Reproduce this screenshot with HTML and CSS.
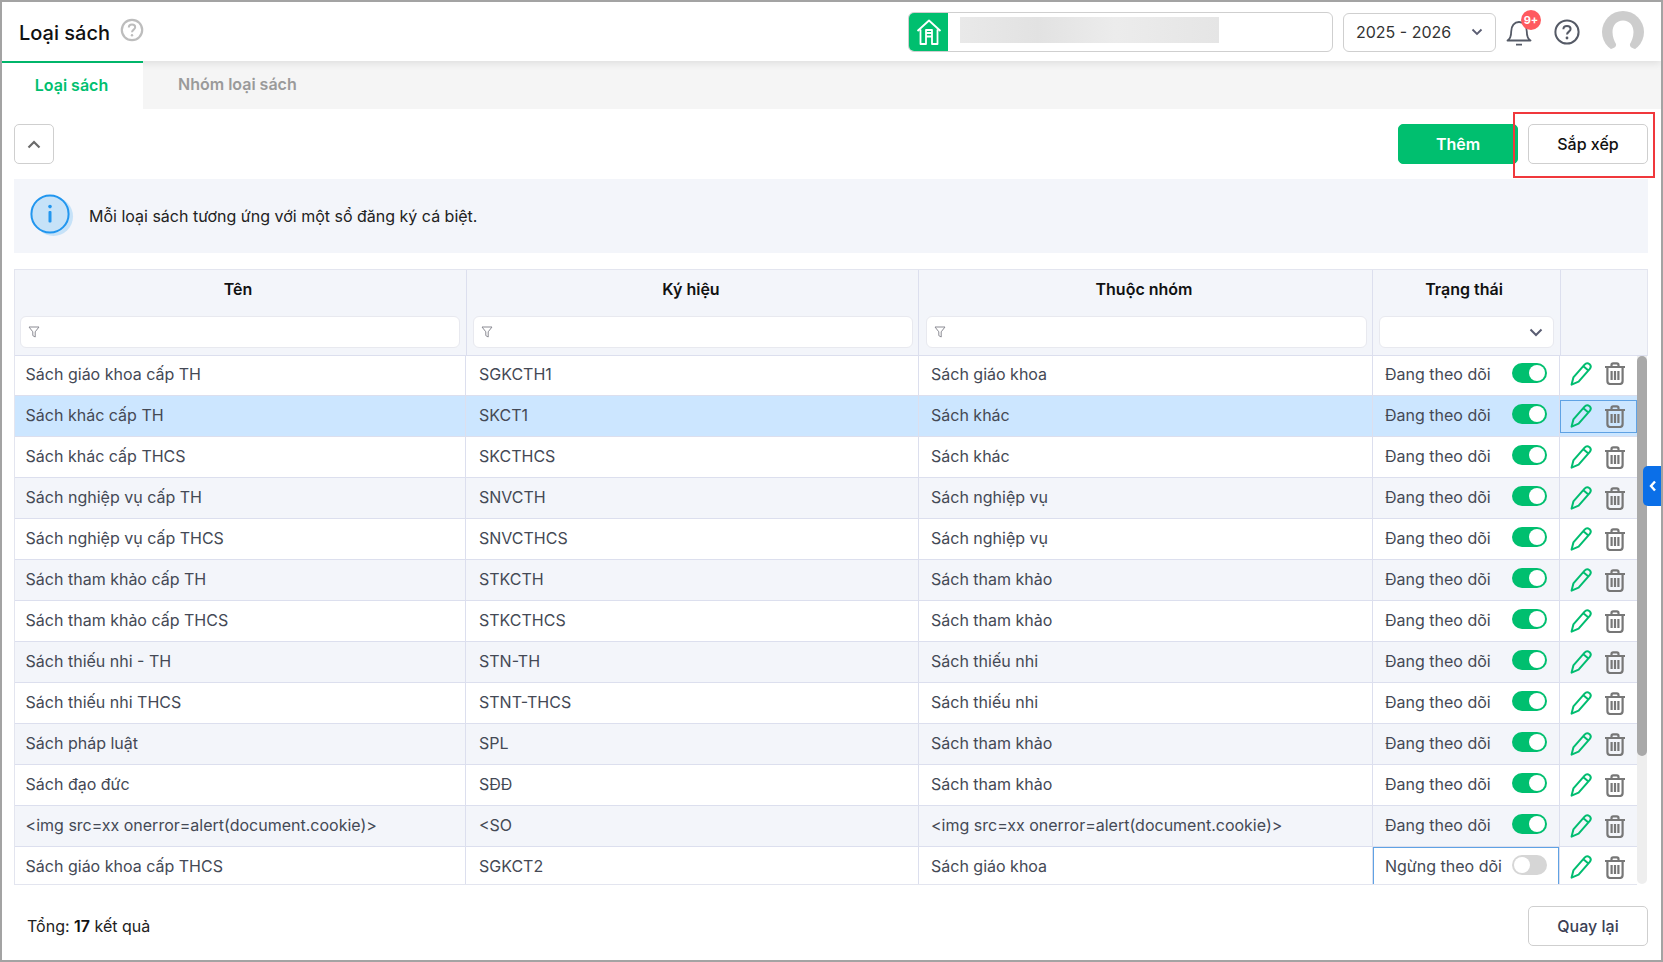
FILE: index.html
```html
<!DOCTYPE html>
<html lang="vi">
<head>
<meta charset="utf-8">
<title>Loại sách</title>
<link rel="stylesheet" href="styles.css">
</head>
<body>
<svg class="sprite" width="0" height="0" aria-hidden="true">
  <symbol id="i-pencil" viewBox="0 0 22 24">
    <path d="M1.6 22.6 L3.4 15.4 L14.6 2.6 C16 1 18 1 19.6 2.2 C21 3.6 21 5.4 19.8 6.8 L8.6 19.6 Z M13.4 4.2 L18.4 8.4" fill="none" stroke="#00bd70" stroke-width="2" stroke-linejoin="round"/>
  </symbol>
  <symbol id="i-trash" viewBox="0 0 22 23">
    <path d="M1 5 H21 M7.5 4.6 V3 C7.5 2 8.2 1.3 9.2 1.3 H12.8 C13.8 1.3 14.5 2 14.5 3 V4.6 M3.4 5.4 V19 C3.4 20.8 4.6 22 6.4 22 H15.6 C17.4 22 18.6 20.8 18.6 19 V5.4 M7.6 9 V18 M11 9 V18 M14.4 9 V18" fill="none" stroke="#777" stroke-width="2.2"/>
  </symbol>
  <symbol id="i-filter" viewBox="0 0 12 12">
    <path d="M1 1 H11 L7.2 5.8 V11 L4.8 9.6 V5.8 Z" fill="none" stroke="#8b8b93" stroke-width="1" stroke-linejoin="round"/>
  </symbol>
</svg>
<div class="frame">
  <header class="topbar">
    <div class="title-wrap">
      <h1 class="title">Loại sách</h1>
      <svg class="title-help" viewBox="0 0 24 24"><circle cx="12" cy="12" r="10.2" fill="none" stroke="#bdbdbd" stroke-width="2.2"/><path d="M8.8 9.5 C8.8 7.6 10.2 6.6 12 6.6 C13.9 6.6 15.2 7.7 15.2 9.3 C15.2 11.6 12 11.7 12 14.2" fill="none" stroke="#bdbdbd" stroke-width="2"/><circle cx="12" cy="17.2" r="1.2" fill="#bdbdbd"/></svg>
    </div>
    <div class="top-actions">
      <div class="school">
        <span class="school-icon">
          <svg viewBox="0 0 26 26" width="26" height="26"><path d="M1.5 12 L13 1.5 L24.5 12 M4.5 10.5 V25 H10 V17.5 H16 V25 H21.5 V10.5 M10 17.5 V11 H16 V17.5 M10 14 H16" fill="none" stroke="#fff" stroke-width="1.8" stroke-linejoin="round"/></svg>
        </span>
        <span class="school-name"></span>
      </div>
      <div class="year">
        <span>2025 - 2026</span>
        <svg viewBox="0 0 12 8" width="12" height="8"><path d="M1.5 1.5 L6 6 L10.5 1.5" fill="none" stroke="#5a5d72" stroke-width="1.8"/></svg>
      </div>
      <div class="bell">
        <svg viewBox="0 0 26 28" width="26" height="28"><path d="M1.5 21.5 C4.8 19.5 5.2 16.5 5.2 12.5 C5.2 6.8 8.4 3 13 3 C17.6 3 20.8 6.8 20.8 12.5 C20.8 16.5 21.2 19.5 24.5 21.5 Z M10 25.6 H16" fill="none" stroke="#555a66" stroke-width="1.8" stroke-linejoin="round"/></svg>
        <span class="badge">9+</span>
      </div>
      <svg class="help" viewBox="0 0 26 26" width="26" height="26"><circle cx="13" cy="13" r="11.6" fill="none" stroke="#555a66" stroke-width="2"/><path d="M9.4 10.2 C9.4 8 11 6.9 13 6.9 C15.1 6.9 16.6 8.1 16.6 10 C16.6 12.6 13 12.7 13 15.6" fill="none" stroke="#555a66" stroke-width="2"/><circle cx="13" cy="19" r="1.4" fill="#555a66"/></svg>
      <svg class="avatar" viewBox="0 0 42 42" width="42" height="42"><circle cx="21" cy="21" r="21" fill="#cdcdcd"/><path d="M21 9.5 C27.5 9.5 31.5 14.5 31.5 21 C31.5 26.5 29.5 30 28 33 C27.5 35 29 37 33 38 L33 42 L9 42 L9 38 C13 37 14.5 35 14 33 C12.5 30 10.5 26.5 10.5 21 C10.5 14.5 14.5 9.5 21 9.5 Z" fill="#fff"/></svg>
    </div>
  </header>

  <nav class="tabs">
    <a class="tab tab-active">Loại sách</a>
    <a class="tab">Nhóm loại sách</a>
  </nav>

  <main class="content">
    <div class="toolbar">
      <button class="btn btn-square">
        <svg viewBox="0 0 14 9" width="14" height="9"><path d="M1.5 7.5 L7 2 L12.5 7.5" fill="none" stroke="#6b6b6b" stroke-width="2.2"/></svg>
      </button>
      <div class="toolbar-right">
        <button class="btn btn-primary">Thêm</button>
        <button class="btn btn-plain">Sắp xếp</button>
      </div>
    </div>

    <div class="info">
      <svg class="info-icon" viewBox="0 0 44 44" width="44" height="44"><circle cx="23.5" cy="22.5" r="19.5" fill="#c6e2f8"/><circle cx="20" cy="20" r="18.6" fill="#c6e2f8" stroke="#2196ef" stroke-width="2"/><circle cx="20" cy="12.6" r="1.8" fill="#2196ef"/><rect x="18.5" y="17" width="3" height="11.5" rx="1" fill="#2196ef"/></svg>
      <p class="info-text">Mỗi loại sách tương ứng với một sổ đăng ký cá biệt.</p>
    </div>

    <div class="grid">
      <table class="grid-head">
        <colgroup><col class="hc1"><col class="hc2"><col class="hc3"><col class="hc4"><col class="hc5"></colgroup>
        <thead>
          <tr class="head-row">
            <th>Tên</th><th>Ký hiệu</th><th>Thuộc nhóm</th><th>Trạng thái</th><th></th>
          </tr>
          <tr class="filter-row">
            <th><div class="filter"><svg width="12" height="12"><use href="#i-filter"/></svg></div></th>
            <th><div class="filter"><svg width="12" height="12"><use href="#i-filter"/></svg></div></th>
            <th><div class="filter"><svg width="12" height="12"><use href="#i-filter"/></svg></div></th>
            <th><div class="filter filter-select"><svg viewBox="0 0 14 9" width="14" height="9"><path d="M1.5 1.5 L7 7 L12.5 1.5" fill="none" stroke="#5a5d72" stroke-width="2"/></svg></div></th>
            <th></th>
          </tr>
        </thead>
      </table>
      <div class="grid-scroll">
        <div class="grid-body">
          <table class="grid-rows">
            <colgroup><col class="bc1"><col class="bc2"><col class="bc3"><col class="bc4"><col class="bc5"></colgroup>
            <tbody>
              <tr><td>Sách giáo khoa cấp TH</td><td>SGKCTH1</td><td>Sách giáo khoa</td><td><div class="status">Đang theo dõi<span class="switch"></span></div></td><td class="acts"><div class="act-wrap"><svg class="ic-pencil"><use href="#i-pencil"/></svg><svg class="ic-trash"><use href="#i-trash"/></svg></div></td></tr>
              <tr class="row-selected"><td>Sách khác cấp TH</td><td>SKCT1</td><td>Sách khác</td><td><div class="status">Đang theo dõi<span class="switch"></span></div></td><td class="acts"><div class="act-wrap act-focus"><svg class="ic-pencil"><use href="#i-pencil"/></svg><svg class="ic-trash"><use href="#i-trash"/></svg></div></td></tr>
              <tr><td>Sách khác cấp THCS</td><td>SKCTHCS</td><td>Sách khác</td><td><div class="status">Đang theo dõi<span class="switch"></span></div></td><td class="acts"><div class="act-wrap"><svg class="ic-pencil"><use href="#i-pencil"/></svg><svg class="ic-trash"><use href="#i-trash"/></svg></div></td></tr>
              <tr class="row-alt"><td>Sách nghiệp vụ cấp TH</td><td>SNVCTH</td><td>Sách nghiệp vụ</td><td><div class="status">Đang theo dõi<span class="switch"></span></div></td><td class="acts"><div class="act-wrap"><svg class="ic-pencil"><use href="#i-pencil"/></svg><svg class="ic-trash"><use href="#i-trash"/></svg></div></td></tr>
              <tr><td>Sách nghiệp vụ cấp THCS</td><td>SNVCTHCS</td><td>Sách nghiệp vụ</td><td><div class="status">Đang theo dõi<span class="switch"></span></div></td><td class="acts"><div class="act-wrap"><svg class="ic-pencil"><use href="#i-pencil"/></svg><svg class="ic-trash"><use href="#i-trash"/></svg></div></td></tr>
              <tr class="row-alt"><td>Sách tham khảo cấp TH</td><td>STKCTH</td><td>Sách tham khảo</td><td><div class="status">Đang theo dõi<span class="switch"></span></div></td><td class="acts"><div class="act-wrap"><svg class="ic-pencil"><use href="#i-pencil"/></svg><svg class="ic-trash"><use href="#i-trash"/></svg></div></td></tr>
              <tr><td>Sách tham khảo cấp THCS</td><td>STKCTHCS</td><td>Sách tham khảo</td><td><div class="status">Đang theo dõi<span class="switch"></span></div></td><td class="acts"><div class="act-wrap"><svg class="ic-pencil"><use href="#i-pencil"/></svg><svg class="ic-trash"><use href="#i-trash"/></svg></div></td></tr>
              <tr class="row-alt"><td>Sách thiếu nhi - TH</td><td>STN-TH</td><td>Sách thiếu nhi</td><td><div class="status">Đang theo dõi<span class="switch"></span></div></td><td class="acts"><div class="act-wrap"><svg class="ic-pencil"><use href="#i-pencil"/></svg><svg class="ic-trash"><use href="#i-trash"/></svg></div></td></tr>
              <tr><td>Sách thiếu nhi THCS</td><td>STNT-THCS</td><td>Sách thiếu nhi</td><td><div class="status">Đang theo dõi<span class="switch"></span></div></td><td class="acts"><div class="act-wrap"><svg class="ic-pencil"><use href="#i-pencil"/></svg><svg class="ic-trash"><use href="#i-trash"/></svg></div></td></tr>
              <tr class="row-alt"><td>Sách pháp luật</td><td>SPL</td><td>Sách tham khảo</td><td><div class="status">Đang theo dõi<span class="switch"></span></div></td><td class="acts"><div class="act-wrap"><svg class="ic-pencil"><use href="#i-pencil"/></svg><svg class="ic-trash"><use href="#i-trash"/></svg></div></td></tr>
              <tr><td>Sách đạo đức</td><td>SĐĐ</td><td>Sách tham khảo</td><td><div class="status">Đang theo dõi<span class="switch"></span></div></td><td class="acts"><div class="act-wrap"><svg class="ic-pencil"><use href="#i-pencil"/></svg><svg class="ic-trash"><use href="#i-trash"/></svg></div></td></tr>
              <tr class="row-alt"><td>&lt;img src=xx onerror=alert(document.cookie)&gt;</td><td>&lt;SO</td><td>&lt;img src=xx onerror=alert(document.cookie)&gt;</td><td><div class="status">Đang theo dõi<span class="switch"></span></div></td><td class="acts"><div class="act-wrap"><svg class="ic-pencil"><use href="#i-pencil"/></svg><svg class="ic-trash"><use href="#i-trash"/></svg></div></td></tr>
              <tr><td>Sách giáo khoa cấp THCS</td><td>SGKCT2</td><td>Sách giáo khoa</td><td class="cell-focus"><div class="status">Ngừng theo dõi<span class="switch switch-off"></span></div></td><td class="acts"><div class="act-wrap"><svg class="ic-pencil"><use href="#i-pencil"/></svg><svg class="ic-trash"><use href="#i-trash"/></svg></div></td></tr>
            </tbody>
          </table>
        </div>
        <div class="scrollbar"><div class="scroll-thumb"></div></div>
      </div>
    </div>
  </main>

  <footer class="footer">
    <div class="total">Tổng: <b>17</b> kết quả</div>
    <button class="btn btn-back">Quay lại</button>
  </footer>

  <div class="side-tab"><svg viewBox="0 0 8 12" width="8" height="12"><path d="M6 1.5 L2 6 L6 10.5" fill="none" stroke="#fff" stroke-width="2.4"/></svg></div>
  <div class="callout"></div>
</div>
</body>
</html>
```
FILE: styles.css
```css
* { box-sizing: border-box; }
html, body { margin: 0; padding: 0; }
body { font-family: Inter, "Noto Sans", sans-serif; font-size: 16px; color: #444955; background: #fff; }
.sprite { position: absolute; }
.frame { position: relative; width: 1663px; height: 962px; border: 2px solid #a3a3a3; display: flex; flex-direction: column; overflow: hidden; background: #fff; }

.topbar { height: 59px; flex: none; display: flex; justify-content: space-between; align-items: center; padding: 0 17px 0 17px; background: #fff; box-shadow: 0 2px 8px rgba(0,0,0,.1); position: relative; z-index: 2; }
.title-wrap { display: flex; align-items: flex-start; gap: 10px; }
.title { margin: 0; font-size: 20px; font-weight: 500; line-height: 28px; color: #111; padding-top: 2px; }
.title-help { width: 24px; height: 24px; margin-top: 1px; }
.top-actions { display: flex; align-items: center; }
.school { width: 425px; height: 40px; border: 1px solid #cfcfcf; border-radius: 6px; display: flex; align-items: stretch; overflow: hidden; margin-top: 1px; }
.school-icon { width: 39px; background: #00bf6f; display: flex; align-items: center; justify-content: center; }
.school-name { width: 259px; height: 26px; margin: 4px 0 0 12px; background: linear-gradient(90deg, #e9e9e9, #e2e2e2 30%, #ececec 60%, #e5e5e5); }
.year { width: 153px; height: 39px; margin: 2px 0 0 10px; border: 1px solid #cfcfcf; border-radius: 6px; display: flex; align-items: center; justify-content: space-between; padding: 0 12px 2px 12px; font-size: 16px; color: #333; }
.bell { position: relative; width: 26px; height: 28px; margin-left: 10px; margin-top: 3px; }
.badge { position: absolute; left: 15px; top: -9px; width: 20px; height: 20px; border-radius: 50%; background: #ff5a5f; color: #fff; font-size: 11px; font-weight: 700; line-height: 20px; text-align: center; }
.help { margin-left: 22px; }
.avatar { margin-left: 22px; }

.tabs { height: 48px; flex: none; display: flex; background: #f5f5f5; font-weight: 600; }
.tab { display: flex; align-items: center; justify-content: center; padding: 0 35px 3px; color: #9a9a9a; }
.tab-active { width: 141px; padding: 0 2px 2px 0; background: #fff; color: #00bf6f; border-top: 2px solid #00b56a; position: relative; z-index: 3; }

.content { flex: none; padding: 15px 13px 0 12px; }
.toolbar { display: flex; justify-content: space-between; height: 40px; margin-bottom: 15px; }
.toolbar-right { display: flex; gap: 10px; }
.btn { height: 40px; border-radius: 5px; font-family: inherit; font-size: 16px; font-weight: 600; padding: 0; background: #fff; border: 1px solid #cfcfcf; }
.btn-square { width: 40px; display: flex; align-items: center; justify-content: center; }
.btn-primary { width: 120px; background: #00bf6f; border-color: #00bf6f; color: #fff; }
.btn-plain { width: 120px; color: #111; font-weight: 500; }

.info { height: 74px; background: #f3f5fa; display: flex; align-items: center; padding-left: 16px; margin-bottom: 16px; }
.info-text { margin: 0 0 0 15px; color: #222; font-size: 16px; }

.grid { display: flex; flex-direction: column; }
.grid-head, .grid-rows { table-layout: fixed; border-collapse: separate; border-spacing: 0; }
.grid-head { width: 1634px; background: #f3f5fa; border-top: 1px solid #e3e5ef; border-left: 1px solid #e3e5ef; border-right: 1px solid #e3e5ef; }
.hc1 { width: 452px; } .hc2 { width: 452px; } .hc3 { width: 454px; } .hc4 { width: 188px; }
.grid-head th { padding: 0; border-right: 1px solid #dcdfee; font-weight: 600; color: #111; font-size: 16px; }
.grid-head th:last-child { border-right: 0; }
.head-row th { height: 46px; padding: 10px 3px 0 0; line-height: 18px; vertical-align: top; }
.head-row th:first-child { padding-right: 5px; }
.head-row th:nth-child(4) { padding-right: 5px; }
.filter-row th { height: 40px; padding: 0 6px 7px; border-bottom: 1px solid #dcdfee; vertical-align: bottom; }
.filter-row th:first-child { padding-left: 5px; }
.filter-row th:nth-child(2) { padding-right: 5px; }
.filter-row th:nth-child(3) { padding: 0 5px 7px 7px; }
.filter { height: 32px; background: #fff; border: 1px solid #e8e9ef; border-radius: 6px; display: flex; align-items: center; padding-left: 7px; }
.filter-select { justify-content: flex-end; padding: 0 10px 0 0; }

.grid-scroll { display: flex; height: 529px; }
.grid-body { width: 1623px; height: 529px; overflow: hidden; border-left: 1px solid #e3e5ef; border-bottom: 1px solid #e3e5ef; }
.grid-rows { width: 1622px; }
.bc1 { width: 451px; } .bc2 { width: 453px; } .bc3 { width: 454px; } .bc4 { width: 187px; }
.grid-rows td { height: 41px; padding: 0 0 2px 12px; border-right: 1px solid #dcdfee; border-bottom: 1px solid #dcdfee; white-space: nowrap; }
.grid-rows tr:first-child td { height: 40px; padding-bottom: 4px; }
.grid-rows td:first-child { padding-left: 10.6px; }
.grid-rows td:nth-child(2) { padding-left: 13px; }
.grid-rows td:last-child { border-right: 0; }
.grid-rows td.acts { padding: 0; }
.row-alt td { background: #f3f5fa; }
.row-selected td { background: #cce6ff; }
.status { display: flex; justify-content: space-between; align-items: center; padding-right: 12px; }
.switch { width: 35px; height: 20px; border-radius: 10px; background: #00bf6f; position: relative; margin-top: -2px; flex: none; }
.switch::after { content: ""; position: absolute; right: 2px; top: 2px; width: 16px; height: 16px; border-radius: 50%; background: #fff; }
.switch-off { background: #d6d6d6; }
.switch-off::after { right: auto; left: 2px; }
.cell-focus { box-shadow: inset 0 0 0 1px #5fa2e4; }
.act-wrap { display: flex; align-items: center; justify-content: flex-start; gap: 12px; padding-left: 10px; height: 33px; }
.act-focus { border: 1px solid #5fa2e4; padding-left: 9px; }
.ic-pencil { width: 22px; height: 24px; }
.ic-trash { width: 22px; height: 23px; }

.scrollbar { width: 10px; height: 528px; background: #eeeeee; border-radius: 0 0 5px 5px; }
.scroll-thumb { height: 400px; width: 10px; background: #a9a9a9; border-radius: 5px; }

.footer { flex: 1; display: flex; justify-content: space-between; align-items: flex-start; padding: 21px 13px 0 25px; }
.total { line-height: 40px; color: #222; }
.total b { font-weight: 600; color: #111; }
.btn-back { width: 120px; color: #3c3f55; font-weight: 500; }

.side-tab { position: absolute; left: 1641px; top: 464px; width: 18px; height: 40px; padding-left: 1px; background: #0b6fe8; border-radius: 5px 0 0 5px; display: flex; align-items: center; justify-content: center; z-index: 4; }
.callout { position: absolute; left: 1511px; top: 110px; width: 142px; height: 66px; border: 2px solid #f0383c; z-index: 5; pointer-events: none; }
```
